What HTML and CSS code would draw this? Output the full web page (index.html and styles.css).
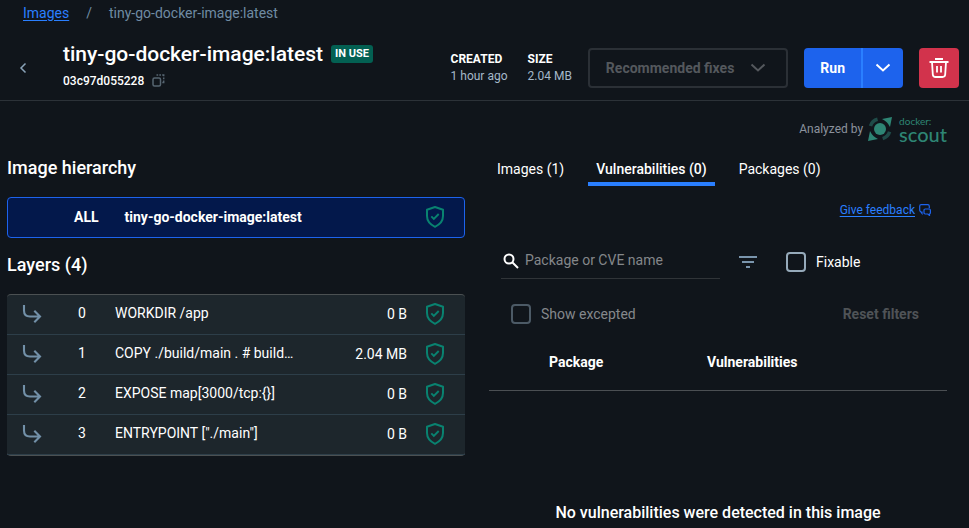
FILE: index.html
```html
<!DOCTYPE html>
<html lang="en">
<head>
<meta charset="utf-8">
<meta name="viewport" content="width=device-width, initial-scale=1">
<title>tiny-go-docker-image:latest</title>
<link rel="stylesheet" href="styles.css">
</head>
<body>
<svg class="defs" aria-hidden="true">
  <symbol id="shield" viewBox="0 0 20 24"><path d="M10 2 18 4.800V11c0 5-3.400 8.600-8 10.800C5.400 19.600 2 16 2 11V4.800Z" fill="none" stroke="currentColor" stroke-width="2" stroke-linejoin="round"/><path d="m6.300 11.400 2.500 2.500 4.900-4.900" fill="none" stroke="currentColor" stroke-width="1.900"/></symbol>
  <symbol id="branch" viewBox="0 0 20 20"><path d="M2 1v5.500Q2 12.500 8 12.500h10M12.300 6.800l5.700 5.700-5.700 5.700" fill="none" stroke="currentColor" stroke-width="2.100"/></symbol>
  <symbol id="chevron" viewBox="0 0 16 10"><path d="m1.500 1.500 6.500 6 6.500-6" fill="none" stroke="currentColor" stroke-width="2"/></symbol>
</svg>

<nav class="breadcrumb" aria-label="Breadcrumb">
  <a href="#images">Images</a><span>/</span><span>tiny-go-docker-image:latest</span>
</nav>

<header class="header">
  <button class="back" type="button" aria-label="Back"><svg width="8" height="12" viewBox="0 0 8 12"><path d="M6.500 1.500 2 6l4.500 4.500" fill="none" stroke="currentColor" stroke-width="1.500"/></svg></button>
  <div class="identity">
    <div class="title-line"><h1>tiny-go-docker-image:latest</h1><span class="badge">IN USE</span></div>
    <div class="digest"><span>03c97d055228</span><button type="button" aria-label="Copy digest"><svg width="13" height="13" viewBox="0 0 13 13" fill="none" stroke="currentColor" stroke-width="1.500"><rect x="1" y="4" width="7.500" height="8" rx="1.500"/><path d="M4.500 1h1.700M7.300 1H9M10.200 1h1.500v1.300M11.700 3.500v1.700M11.700 6.600v1.800h-1.400"/></svg></button></div>
  </div>
  <dl class="facts">
    <div><dt>CREATED</dt><dd>1 hour ago</dd></div>
    <div><dt>SIZE</dt><dd>2.04 MB</dd></div>
  </dl>
  <button class="fixes" type="button" disabled>Recommended fixes<svg width="16" height="10"><use href="#chevron"/></svg></button>
  <div class="run">
    <button type="button">Run</button>
    <button type="button" aria-label="More run options"><svg width="16" height="10"><use href="#chevron"/></svg></button>
  </div>
  <button class="delete" type="button" aria-label="Delete image"><svg width="20" height="20" viewBox="0 0 20 20" fill="none" stroke="currentColor" stroke-width="1.800"><path d="M6 1h8M.5 4h19M3 4l.8 12.500Q4 19 6.500 19h7q2.500 0 2.700-2.500L17 4M8 8v6.500M12 8v6.500"/></svg></button>
</header>

<main class="columns">
  <section class="hierarchy">
    <h2>Image hierarchy</h2>
    <button class="all-layers" type="button"><span>ALL</span><span class="name">tiny-go-docker-image:latest</span><svg width="20" height="24"><use href="#shield"/></svg></button>
    <h2>Layers (4)</h2>
    <table class="layers">
      <colgroup><col class="c-icon"><col class="c-num"><col><col class="c-size"><col class="c-state"></colgroup>
      <tbody>
        <tr><td><svg width="20" height="20"><use href="#branch"/></svg></td><td>0</td><td>WORKDIR /app</td><td>0 B</td><td><svg width="20" height="24"><use href="#shield"/></svg></td></tr>
        <tr><td><svg width="20" height="20"><use href="#branch"/></svg></td><td>1</td><td>COPY ./build/main . # build…</td><td>2.04 MB</td><td><svg width="20" height="24"><use href="#shield"/></svg></td></tr>
        <tr><td><svg width="20" height="20"><use href="#branch"/></svg></td><td>2</td><td>EXPOSE map[3000/tcp:{}]</td><td>0 B</td><td><svg width="20" height="24"><use href="#shield"/></svg></td></tr>
        <tr><td><svg width="20" height="20"><use href="#branch"/></svg></td><td>3</td><td>ENTRYPOINT ["./main"]</td><td>0 B</td><td><svg width="20" height="24"><use href="#shield"/></svg></td></tr>
      </tbody>
    </table>
  </section>

  <section class="analysis">
    <div class="scout">
      <span>Analyzed by</span>
      <svg width="24" height="24" viewBox="0 0 24 24" aria-hidden="true"><circle cx="12" cy="12" r="10" fill="none" stroke="#1f4b48" stroke-width="3.500" stroke-dasharray="10 21.416" stroke-dashoffset="-2.900"/><circle cx="12" cy="12" r="6" fill="#2e8574"/><path d="M14 2 24 0l-2 10Q19.500 4.500 14 2ZM2 14 0 24l10-2Q4.500 19.500 2 14Z" fill="#2e8574"/></svg>
      <div class="wordmark"><span>docker:</span><strong>scout</strong></div>
    </div>
    <div class="tabs" role="tablist">
      <button type="button" role="tab">Images (1)</button>
      <button type="button" role="tab" aria-selected="true">Vulnerabilities (0)</button>
      <button type="button" role="tab">Packages (0)</button>
    </div>
    <div class="feedback"><a href="#feedback">Give feedback</a><svg width="12" height="12" viewBox="0 0 12 12" fill="none" stroke="currentColor" stroke-width="1.200"><path d="M3 7.500v2L1.500 7.500Q.700 7 .700 6V2.200Q.700.700 2.200.700h6.600q1.500 0 1.500 1.500v2"/><path d="M6.200 5h4q1.200 0 1.200 1.200v2.600Q11.400 10 10.500 10v1.500L8.800 10H6.200Q5 10 5 8.800V6.200Q5 5 6.200 5Z"/></svg></div>
    <div class="filters">
      <label class="search"><svg width="16" height="16" viewBox="0 0 16 16" fill="none" stroke="currentColor" stroke-width="2"><circle cx="6" cy="6" r="4.500"/><path d="m9.500 9.500 5.500 5.500"/></svg><input type="text" placeholder="Package or CVE name" aria-label="Package or CVE name"></label>
      <button class="sort" type="button" aria-label="Filter"><svg width="18" height="12" viewBox="0 0 18 12" fill="currentColor"><path d="M0 0h18v2H0zM3 5h12v2H3zM7 10h4v2H7z"/></svg></button>
      <label class="check"><input type="checkbox">Fixable</label>
    </div>
    <div class="exceptions">
      <label class="check muted"><input type="checkbox" disabled>Show excepted</label>
      <button class="reset" type="button" disabled>Reset filters</button>
    </div>
    <table class="results">
      <thead><tr><th>Package</th><th>Vulnerabilities</th></tr></thead>
    </table>
    <p class="empty">No vulnerabilities were detected in this image</p>
  </section>
</main>
</body>
</html>
```
FILE: styles.css
```css
* { box-sizing: border-box; }

body {
  margin: 0;
  background: #10151b;
  color: #fff;
  font: 400 14px/20px Roboto, sans-serif;
}

svg { display: block; flex: none; }
.defs { position: absolute; width: 0; height: 0; }

button {
  margin: 0;
  padding: 0;
  border: 0;
  background: none;
  color: inherit;
  font: inherit;
}

h1, h2, p, dl, dd { margin: 0; }

.breadcrumb {
  display: flex;
  gap: 17px;
  padding: 3px 23px 0;
  color: #6f8ba3;
}

.breadcrumb a, .feedback a { color: #2a7fff; text-underline-offset: 2px; }

.header {
  display: flex;
  align-items: center;
  height: 78px;
  padding: 22px 10px 10px 15px;
  border-bottom: 1px solid #2c3238;
}

.back {
  display: flex;
  justify-content: center;
  width: 16px;
  color: #8aa3b8;
}

.identity { flex: 1; padding: 0 0 2px 32px; }
.title-line { display: flex; align-items: center; gap: 8px; }

h1 { font-size: 21px; line-height: 28px; font-weight: 500; }

.badge {
  padding: 0 4px;
  border-radius: 3px;
  background: #036052;
  font-size: 11px;
  line-height: 18px;
  font-weight: 700;
}

.digest {
  display: flex;
  align-items: center;
  gap: 8px;
  font-size: 12px;
  font-weight: 500;
  line-height: 26px;
}

.digest button { color: #566571; }

.facts { display: flex; gap: 20px; margin-right: 16px; font-size: 12px; line-height: 17px; }
.facts dt { font-weight: 700; }
.facts dd { color: #a5b8c9; }

.fixes {
  display: flex;
  align-items: center;
  gap: 16px;
  height: 40px;
  padding: 0 20px 0 16px;
  border: 2px solid #2b3036;
  border-radius: 4px;
  color: #54585d;
  font-weight: 700;
}

.run {
  display: flex;
  height: 40px;
  margin: 0 16px;
  overflow: hidden;
  border-radius: 4px;
  background: #1d63ed;
  font-weight: 700;
}

.run button { display: flex; align-items: center; padding: 0 16px; }
.run button + button { padding: 0 12px; border-left: 2px solid #2a7fff; }

.delete {
  display: grid;
  place-items: center;
  width: 40px;
  height: 40px;
  border-radius: 4px;
  background: #d2334c;
}

.columns {
  display: grid;
  grid-template-columns: 1fr 1fr;
  gap: 24px;
  padding: 0 22px 0 7px;
}

.hierarchy { padding-top: 55px; }

h2 { font-size: 18px; line-height: 24px; font-weight: 500; }

.all-layers {
  display: flex;
  align-items: center;
  gap: 26px;
  width: 100%;
  height: 41px;
  margin: 17px 0 15px;
  padding: 0 19px 2px 66px;
  border: 1px solid #1d63ed;
  border-radius: 4px;
  background: #03184b;
  font-weight: 700;
}

.name { flex: 1; text-align: left; }
.all-layers svg, .layers td:last-child { color: #098270; }

.layers {
  width: 100%;
  margin-top: 17px;
  border-top: 1px solid #4b5052;
  border-bottom: 1px solid #4b5052;
  border-radius: 4px;
  border-spacing: 0;
  table-layout: fixed;
  background: #1d262c;
}

.layers td { height: 40px; padding: 0 0 2px; border-bottom: 1px solid #2d3e49; }
.layers td:nth-child(1) { padding-left: 15px; color: #7290a8; }
.layers td:nth-child(2) { padding-bottom: 3px; text-align: center; }
.layers td:nth-child(3) { padding: 0 0 3px 8px; white-space: nowrap; }
.layers td:nth-child(4) { text-align: right; }
.layers td:nth-child(5) { padding-left: 18px; }
.c-icon, .c-num { width: 50px; }
.c-size { width: 80px; }
.c-state { width: 58px; }

.scout {
  display: flex;
  align-items: center;
  justify-content: flex-end;
  gap: 5px;
  height: 56px;
  color: #8c929d;
  font-size: 12px;
}

.wordmark {
  display: grid;
  padding-left: 2px;
  color: #2e8574;
  font-family: Lato, sans-serif;
  font-size: 10px;
  line-height: 10px;
}

.wordmark strong { font-size: 20px; line-height: 16px; font-weight: 500; }

.tabs { display: flex; gap: 16px; }
.tabs button { height: 29px; padding: 0 8px 6px; }
.tabs [aria-selected] { padding-bottom: 2px; border-bottom: 4px solid #2a7fff; font-weight: 500; }

.feedback {
  display: flex;
  align-items: center;
  justify-content: flex-end;
  gap: 4px;
  height: 48px;
  padding-right: 16px;
  color: #1d63ed;
  font-size: 12px;
}

.filters { display: flex; align-items: center; height: 56px; padding-left: 12px; }

.search {
  display: flex;
  align-items: center;
  gap: 6px;
  width: 219px;
  height: 36px;
  margin-bottom: 2px;
  padding-left: 2px;
  border-bottom: 1px solid #303438;
}

.search input {
  flex: 1;
  min-width: 0;
  padding: 0 0 2px;
  border: 0;
  outline: 0;
  background: none;
  color: #fff;
  font: inherit;
}

.search input::placeholder { color: #84878a; opacity: 1; }
.sort { margin: 0 29px 0 19px; color: #7a95ad; }
.check { display: flex; align-items: center; gap: 10px; }

.check input {
  appearance: none;
  width: 20px;
  height: 20px;
  margin: 0;
  border: 2px solid #96aaba;
  border-radius: 4px;
}

.muted { color: #85888c; }
.muted input { border-color: #4c5a66; }

.exceptions {
  display: flex;
  align-items: center;
  justify-content: space-between;
  height: 48px;
  padding: 0 28px 0 22px;
}

.reset { color: #4f5357; font-weight: 700; }

.results { width: 100%; border-spacing: 0; border-bottom: 1px solid #4b4f53; }
.results th { height: 52px; padding: 0 0 4px 60px; font-weight: 700; text-align: left; }
.results th:first-child { width: 158px; }

.empty { padding: 112px 0 4px; font-size: 16px; font-weight: 500; text-align: center; }
```
